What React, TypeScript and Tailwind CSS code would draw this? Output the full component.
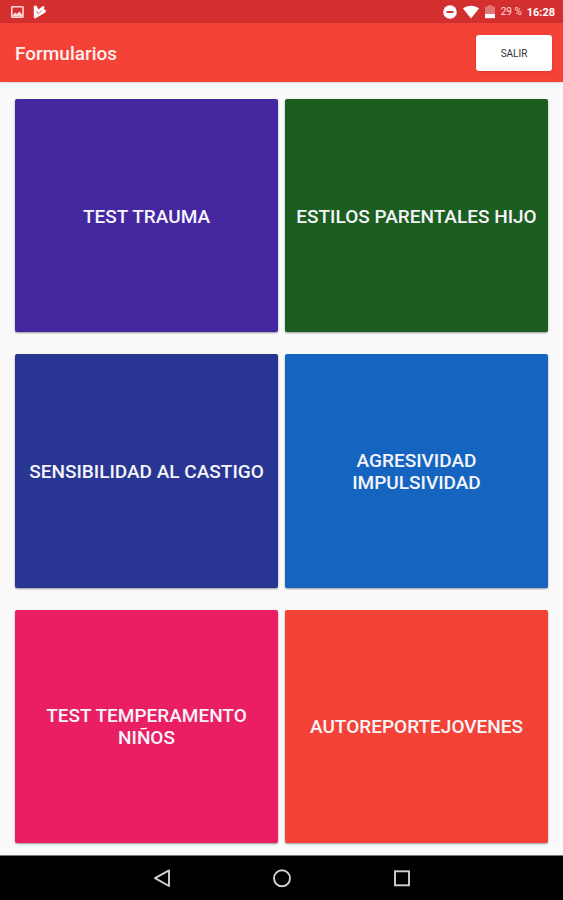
import React from "react";
import clsx from "clsx";

const forms = [
  { name: "TEST TRAUMA", color: "bg-[#4527a0]" },
  { name: "ESTILOS PARENTALES HIJO", color: "bg-[#1b5e20]" },
  { name: "SENSIBILIDAD AL CASTIGO", color: "bg-[#283593]" },
  { name: "AGRESIVIDAD IMPULSIVIDAD", color: "bg-[#1565c0]" },
  { name: "TEST TEMPERAMENTO NIÑOS", color: "bg-[#e91e63]" },
  { name: "AUTOREPORTEJOVENES", color: "bg-[#f44336]" },
];

const StatusBar = () => (
  <div className="flex h-[23px] items-center justify-between bg-[#d32f2f] pr-2 pl-2.5 text-white">
    <div className="flex items-center gap-2">
      <svg viewBox="0 0 14 14" className="size-3.5 text-[#ffd5d5]" fill="none" stroke="currentColor" strokeWidth="1.6">
        <rect x="1.8" y="1.8" width="11.2" height="10.4" rx="0.5" />
        <path d="M2.6 11.6V10L5.2 7.6 6.8 9 9.4 6.6 12.2 9.6V11.6Z" fill="currentColor" stroke="none" />
      </svg>
      <svg viewBox="0 0 14 14" className="size-3.5" fill="currentColor">
        <path d="M1.8.9 4.4.5 6.4 4.6 11.2.8 12.6 2.4 11.6 4 14 5.4 13.4 7.4 3.2 13.4 1.8 12.6Z" />
        <path d="M4.6 6 6.2 9 10 5.2" fill="none" stroke="#d32f2f" strokeWidth="0.7" />
      </svg>
    </div>
    <div className="flex items-center pt-px">
      <svg viewBox="0 0 14 14" className="size-3.5">
        <circle cx="7" cy="7" r="6.8" fill="#fff" />
        <rect x="3.6" y="6" width="6.8" height="2" fill="#d32f2f" />
      </svg>
      <svg viewBox="0 0 16 14" className="ml-1.5 h-3.5 w-4" fill="currentColor">
        <path d="M0 3.6C4.6-.2 11.4-.2 16 3.6L8 13.4Z" />
      </svg>
      <svg viewBox="0 0 10 14" className="ml-1.5 h-3.5 w-2.5" fill="currentColor">
        <path d="M3 .2H7V1.4H10V9H0V1.4H3Z" opacity="0.35" />
        <path d="M0 9H10V13.2H0Z" />
      </svg>
      <span className="ml-1.5 w-[26px] text-[10px] leading-4 whitespace-nowrap text-[#ffdcdc]">29 %</span>
      <span className="pt-px text-[11px] leading-4 font-bold">16:28</span>
    </div>
  </div>
);

const NavBar = () => (
  <nav className="flex h-[45px] items-center justify-center gap-24 border-t border-[#777] bg-black text-[#d0d0d0]">
    <button type="button" aria-label="Atrás">
      <svg viewBox="0 0 24 24" className="size-6" fill="none" stroke="currentColor" strokeWidth="1.9" strokeLinejoin="round">
        <path d="M19 4.4V20L5 12.2Z" />
      </svg>
    </button>
    <button type="button" aria-label="Inicio">
      <svg viewBox="0 0 24 24" className="size-6" fill="none" stroke="currentColor" strokeWidth="1.9">
        <circle cx="12" cy="12.3" r="8" />
      </svg>
    </button>
    <button type="button" aria-label="Recientes">
      <svg viewBox="0 0 24 24" className="size-6" fill="none" stroke="currentColor" strokeWidth="1.9">
        <rect x="5" y="5.3" width="14" height="14" />
      </svg>
    </button>
  </nav>
);

const App = () => {
  return (
    <div className="flex min-h-screen flex-col bg-[#fafafa] font-[Roboto,sans-serif]">
      <StatusBar />

      <header className="flex h-[59px] items-center justify-between bg-[#f44336] pr-[11px] pl-[15px] shadow-sm">
        <h1 className="pt-0.5 text-[19px] leading-[22px] font-medium text-[#ffefef]">Formularios</h1>
        <button type="button" className="h-9 w-19 rounded-[3px] bg-white pt-0.5 text-[10px] leading-4 text-[#333] shadow-sm">
          SALIR
        </button>
      </header>

      <main className="grid flex-1 auto-rows-fr grid-cols-2 gap-x-[7px] gap-y-[22px] px-[15px] pt-[17px] pb-3">
        {forms.map((form) => (
          <button
            key={form.name}
            type="button"
            className={clsx(
              "min-h-40 rounded-[2px] px-2 pt-0.5 text-[19px] leading-[22px] font-medium text-[#f5f5fa] shadow-[0_1px_2px_rgba(0,0,0,0.4)]",
              form.color
            )}
          >
            {form.name}
          </button>
        ))}
      </main>

      <NavBar />
    </div>
  );
};

export default App;
